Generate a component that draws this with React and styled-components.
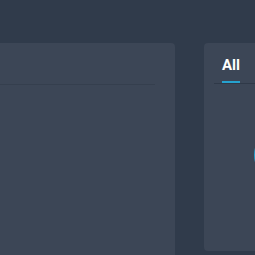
import styled, { createGlobalStyle } from 'styled-components'

const GlobalStyle = createGlobalStyle`
  html, body {
    margin: 0;
    padding: 0;
    background: #303b4b;
    overflow: hidden;
    font-family: Roboto, "Liberation Sans", sans-serif;
  }
`

const Page = styled.div`
  display: flex;
  gap: 29px;
  padding-top: 43px;
  margin-left: -20px;
  width: 400px;
  height: 255px;
  box-sizing: border-box;
`

const Card = styled.div`
  background: #3c4656;
  border-radius: 4px;
  width: ${p => p.$width}px;
  height: ${p => p.$height}px;
  flex-shrink: 0;
  box-sizing: border-box;
`

const CardHeader = styled.div`
  height: 41px;
  margin-right: 20px;
  border-bottom: 1px solid #353f4e;
`

const TabBar = styled.div`
  display: flex;
  margin-left: 10px;
  height: 40px;
  border-bottom: 1px solid #2f3948;
`

const Tab = styled.div`
  display: flex;
  align-items: flex-start;
  padding: 13px 0 0;
  margin-left: 8px;
  font-size: 15px;
  font-weight: 700;
  color: #ffffff;
  border-bottom: 2px solid ${p => (p.$active ? '#26a2cf' : 'transparent')};
  box-sizing: border-box;
  height: 40px;
`

const ChartRow = styled.div`
  display: flex;
  padding: 46px 0 0 50px;
`

const Ring = styled.div`
  width: 50px;
  height: 50px;
  border-radius: 50%;
  border: 2px solid #26a2cf;
  box-sizing: border-box;
`

export default function App() {
  return (
    <>
      <GlobalStyle />
      <Page>
        <Card $width={195} $height={240}>
          <CardHeader />
        </Card>
        <Card $width={120} $height={208}>
          <TabBar>
            <Tab $active>All</Tab>
          </TabBar>
          <ChartRow>
            <Ring />
          </ChartRow>
        </Card>
      </Page>
    </>
  )
}
